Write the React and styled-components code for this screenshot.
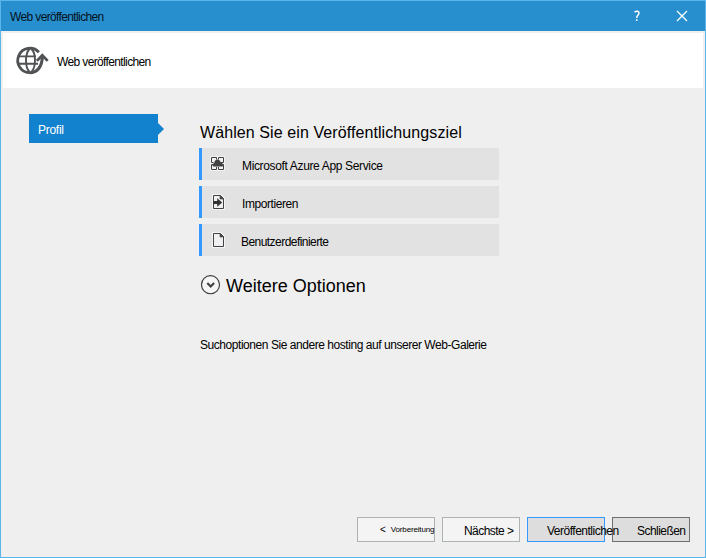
import React from "react";
import styled, { createGlobalStyle } from "styled-components";

const GlobalStyle = createGlobalStyle`
  * { box-sizing: border-box; }
  body { margin: 0; font-family: "Liberation Sans", Arial, sans-serif; font-size: 12px; color: #000; }
  button { font-family: inherit; color: inherit; }
`;

const Window = styled.div`
  width: 706px;
  height: 558px;
  display: flex;
  flex-direction: column;
  background: #efefef;
  border: 1px solid #5cb5ea;
  overflow: hidden;
`;

const Label = styled.span`
  display: block;
  white-space: nowrap;
  font-size: ${(p) => p.$size || 12}px;
  line-height: ${(p) => p.$line || 16}px;
  letter-spacing: ${(p) => p.$track || 0}px;
`;

const TitleBar = styled.header`
  flex: none;
  height: 30px;
  display: flex;
  align-items: center;
  padding: 2px 17px 0 9px;
  background: #288fce;
  color: #04111c;
`;

const TitleActions = styled.div`
  margin-left: auto;
  display: flex;
  align-items: center;
  gap: 35px;
  height: 26px;
  padding-bottom: 2px;
`;

const IconButton = styled.button`
  display: flex;
  padding: 0;
  border: 0;
  background: none;
  color: #fff;
`;

const Banner = styled.div`
  flex: none;
  height: 55px;
  margin: 2px 2px 0;
  display: flex;
  align-items: center;
  gap: 7px;
  padding: 0 0 0 11px;
  background: #fff;
`;

const BannerText = styled.div`
  padding-top: 3px;
`;

const Content = styled.div`
  flex: 1;
  display: flex;
  padding: 26px 28px 0;
`;

const Sidebar = styled.nav`
  width: 135px;
  margin-right: 35px;
`;

const Tab = styled.div`
  position: relative;
  width: 129px;
  height: 29px;
  padding: 8px 0 0 9px;
  background: #1382ce;
  color: #fff;
  &::after {
    content: "";
    position: absolute;
    left: 129px;
    top: 9px;
    border: 6px solid transparent;
    border-right: 0;
    border-left-color: #1382ce;
  }
`;

const Main = styled.main`
  width: 300px;
`;

const Heading = styled.h1`
  margin: 0;
  height: 34px;
  padding: 9px 0 0 1px;
  font-weight: normal;
`;

const Targets = styled.div`
  display: flex;
  flex-direction: column;
  gap: 6px;
`;

const Target = styled.div`
  height: 32px;
  display: flex;
  align-items: center;
  border-left: 3px solid #3399ff;
  background: #e2e2e2;
`;

const TargetIcon = styled.div`
  width: ${(p) => p.$width}px;
  padding-left: 8px;
  display: flex;
`;

const TargetText = styled.div`
  padding-top: 4px;
`;

const MoreOptions = styled.div`
  display: flex;
  align-items: center;
  gap: 5px;
  height: 24px;
  margin-top: 17px;
  padding-left: 2px;
`;

const MoreTitle = styled.div`
  padding-top: 2px;
`;

const Hint = styled.p`
  margin: 40px 0 0 1px;
`;

const Footer = styled.footer`
  flex: none;
  display: flex;
  gap: 7px;
  height: 40px;
  padding-left: 356px;
`;

const Button = styled.button`
  position: relative;
  z-index: ${(p) => (p.$raised ? 1 : 0)};
  flex: none;
  width: 78px;
  height: 25px;
  display: flex;
  align-items: center;
  gap: 5px;
  padding: ${(p) => p.$top ?? 2}px 0 0 ${(p) => p.$inset}px;
  border: 1px solid ${(p) => p.$edge || "#adb2b5"};
  background: ${(p) => p.$fill || "#f4f4f4"};
`;

const GlobeIcon = () => (
  <svg width="36" height="31" viewBox="0 0 36 31" fill="none" stroke="#505254">
    <path d="M24.9 7.2A12.2 12.2 0 1 0 16 27.7" strokeWidth="2.8" />
    <path d="M4.5 11.4H22M4.5 18.8H24M15.5 4C10.8 9 10.8 22 15.5 27M17.5 4c2.4 2.6 3.6 6.5 3.5 11 0 5-1.2 9.5-3.5 12" strokeWidth="1.9" />
    <path d="M15.8 27.7C23 27.7 28.3 22 28.3 11" strokeWidth="3.1" />
    <path d="m22.9 15.9 5.4-5.6 5.4 5.6" strokeWidth="2.8" />
  </svg>
);

const HelpIcon = () => (
  <svg width="8" height="12" viewBox="0 0 8 12" fill="none" stroke="#fff">
    <path d="M1.5 2.2C3.6.5 6.2 1.2 6 3.3 5.8 5.1 3.7 5 3.7 8" strokeWidth="1.5" />
    <path d="M3.7 9.3v1.6" strokeWidth="1.6" />
  </svg>
);

const CloseIcon = () => (
  <svg width="12" height="12" viewBox="0 0 12 12" stroke="#fff" strokeWidth="1.3">
    <path d="m1 1 10 10M11 1 1 11" />
  </svg>
);

const AzureIcon = () => (
  <svg width="16" height="16" viewBox="0 0 16 16" fill="none">
    <path d="M0 0h15v15H0z" fill="#f1f1f1" />
    <path d="M6.5 3.5v-2h-5v5h2M8.5 3.5v-2h5v5h-2M3.5 8.5h-2v5h5v-2.5M11.5 8.5h2v5h-5v-2.5" stroke="#424242" />
    <path d="M4 10.6C1.9 10.4 2 7.4 4.2 7.2 4.3 2.8 9.4 2.5 10.3 5.7c1.5-.1 2 .9 1.9 1.8 1.8.5 1.5 3-.3 3.1z" fill="#424242" />
  </svg>
);

const FileIcon = ({ arrow }) => (
  <svg width="16" height="16" viewBox="0 0 16 16" fill="none">
    <path d="M2 0h9l4 4v12H2z" fill="#f4f4f4" />
    <path d="M3.5 1.5h7l3 3v10h-10z" fill="#f0eff1" stroke="#424242" />
    <path d="M10 1.5v3.5h3.5z" fill="#424242" stroke="#424242" strokeWidth=".6" />
    {arrow && <path d="M3 7h4.2V4.2l5 4.3-5 4.3V10H3z" fill="#333" />}
  </svg>
);

const ExpandIcon = () => (
  <svg width="20" height="20" viewBox="0 0 20 20" fill="none" stroke="#3f3f42">
    <circle cx="9.5" cy="9.7" r="9" fill="#f6f6f6" strokeWidth="1.15" />
    <path d="m6.3 8 3.4 3.4L13.1 8" strokeWidth="2.1" />
  </svg>
);

export default function App() {
  return (
    <>
      <GlobalStyle />
      <Window>
        <TitleBar>
          <Label $track={-0.63}>Web veröffentlichen</Label>
          <TitleActions>
            <IconButton aria-label="Hilfe"><HelpIcon /></IconButton>
            <IconButton aria-label="Schließen"><CloseIcon /></IconButton>
          </TitleActions>
        </TitleBar>
        <Banner>
          <GlobeIcon />
          <BannerText><Label $track={-0.63}>Web veröffentlichen</Label></BannerText>
        </Banner>
        <Content>
          <Sidebar>
            <Tab><Label $track={-0.28}>Profil</Label></Tab>
          </Sidebar>
          <Main>
            <Heading><Label $size={16} $line={20} $track={0.09}>Wählen Sie ein Veröffentlichungsziel</Label></Heading>
            <Targets>
              <Target>
                <TargetIcon $width={40}><AzureIcon /></TargetIcon>
                <TargetText><Label $track={-0.35}>Microsoft Azure App Service</Label></TargetText>
              </Target>
              <Target>
                <TargetIcon $width={40}><FileIcon arrow /></TargetIcon>
                <TargetText><Label $track={-0.42}>Importieren</Label></TargetText>
              </Target>
              <Target>
                <TargetIcon $width={39}><FileIcon /></TargetIcon>
                <TargetText><Label $track={-0.55}>Benutzerdefinierte</Label></TargetText>
              </Target>
            </Targets>
            <MoreOptions>
              <ExpandIcon />
              <MoreTitle><Label $size={18} $line={22}>Weitere Optionen</Label></MoreTitle>
            </MoreOptions>
            <Hint><Label $track={-0.45}>Suchoptionen Sie andere hosting auf unserer Web-Galerie</Label></Hint>
          </Main>
        </Content>
        <Footer>
          <Button $inset={22} $top={0}>
            <Label $size={10}>&lt;</Label>
            <Label $size={8} $track={-0.16}>Vorbereitung</Label>
          </Button>
          <Button $inset={21}><Label $track={-0.55}>Nächste &gt;</Label></Button>
          <Button $raised $inset={19} $edge="#3399ff" $fill="#dddddd"><Label $track={-0.5}>Veröffentlichen</Label></Button>
          <Button $inset={24} $edge="#707070" $fill="#dddddd"><Label $track={-0.55}>Schließen</Label></Button>
        </Footer>
      </Window>
    </>
  );
}
